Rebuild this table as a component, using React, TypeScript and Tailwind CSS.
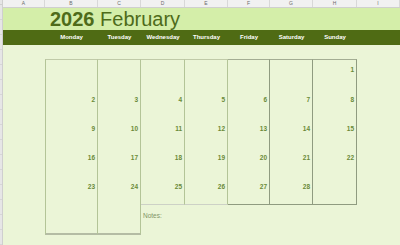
import React from "react";

const colLetters = ["A", "B", "C", "D", "E", "F", "G", "H", "I"];
const colWidths = ["w-[42px]", "w-[53px]", "w-[43px]", "w-[44px]", "w-[43px]", "w-[42px]", "w-[43px]", "w-[44px]", "flex-1"];
const days = ["Monday", "Tuesday", "Wednesday", "Thursday", "Friday", "Saturday", "Sunday"];

// one array per week, one entry per weekday column
const weeks = [
  [null, null, null, null, null, null, 1],
  [2, 3, 4, 5, 6, 7, 8],
  [9, 10, 11, 12, 13, 14, 15],
  [16, 17, 18, 19, 20, 21, 22],
  [23, 24, 25, 26, 27, 28, null],
  [null, null, null, null, null, null, null],
];
const rowHeights = ["h-[14px]", "h-[30px]", "h-[29px]", "h-[29px]", "h-[29px]", "h-[14px]"];

const DayColumn = ({ index, tall }: { index: number; tall: boolean }) => {
  const dark = index >= 4;
  return (
    <div
      className={`flex flex-col ${colWidths[index + 1]} border-r border-t ${
        dark ? "border-[#8f9b80] border-t-[#a3ad93]" : "border-[#b3c497] border-t-[#c0caa8]"
      } ${index === 0 ? "border-l border-l-[#b3c497]" : ""} ${
        tall ? "row-span-2 border-b-2 border-b-[#b4bca4]" : ""
      } ${!tall && index < 4 ? "border-b border-b-[#cdd1c6]" : ""} ${
        !tall && index >= 4 ? "border-b border-b-[#8f9b80]" : ""
      }`}
    >
      {weeks.map((week, r) => (
        <div key={r} className={`${rowHeights[r]} shrink-0 flex items-end justify-end pr-[2px] pb-[1px]`}>
          {week[index] !== null && (
            <span className="text-[6.5px] leading-none font-bold text-[#6a8a38]">{week[index]}</span>
          )}
        </div>
      ))}
      {tall && <div className="flex-1" />}
    </div>
  );
};

export default function App() {
  return (
    <div className="w-[400px] h-[245px] overflow-hidden flex bg-[#ebf5d7] font-['Liberation_Sans',Arial,sans-serif]">
      {/* row headers */}
      <div className="w-[3px] flex flex-col bg-[#e6e6e6] border-r border-[#cfcfcf]">
        <div className="h-[8px] border-b border-[#cfcfcf]" />
        {Array.from({ length: 16 }).map((_, i) => (
          <div key={i} className="h-[15px] shrink-0 border-b border-[#d6d6d6]" />
        ))}
      </div>

      <div className="flex-1 flex flex-col">
        {/* column headers */}
        <div className="h-[8px] flex bg-[#f1f1f1] border-b border-[#cfcfcf]">
          {colLetters.map((l, i) => (
            <div
              key={l}
              className={`${colWidths[i]} flex items-center justify-center border-r border-[#d8d8d8] text-[5px] leading-none text-[#6b6b6b]`}
            >
              {l}
            </div>
          ))}
        </div>

        {/* title */}
        <div className="h-[22px] bg-[#d4eea9] flex items-end pl-[47px]">
          <span className="text-[20px] leading-none pb-[1px] text-[#4e6b1a]">
            <span className="font-bold">2026</span> February
          </span>
        </div>

        {/* weekday band */}
        <div className="h-[15px] bg-[#4f6b14] flex">
          <div className={colWidths[0]} />
          {days.map((d, i) => (
            <div
              key={d}
              className={`${colWidths[i + 1]} flex items-center justify-center text-[6px] font-bold text-white`}
            >
              {d}
            </div>
          ))}
        </div>

        <div className="h-[14px]" />

        {/* calendar */}
        <div className="flex">
          <div className={colWidths[0]} />
          <div className="grid grid-cols-[53px_43px_44px_43px_42px_43px_44px] grid-rows-[146px_30px]">
            <DayColumn index={0} tall />
            <DayColumn index={1} tall />
            {[2, 3, 4, 5, 6].map((i) => (
              <DayColumn key={i} index={i} tall={false} />
            ))}
            <div className="col-start-3 col-span-5 row-start-2 pl-[2px] pt-[8px] text-[6.5px] leading-none text-[#7f9466]">
              Notes:
            </div>
          </div>
        </div>
      </div>
    </div>
  );
}
